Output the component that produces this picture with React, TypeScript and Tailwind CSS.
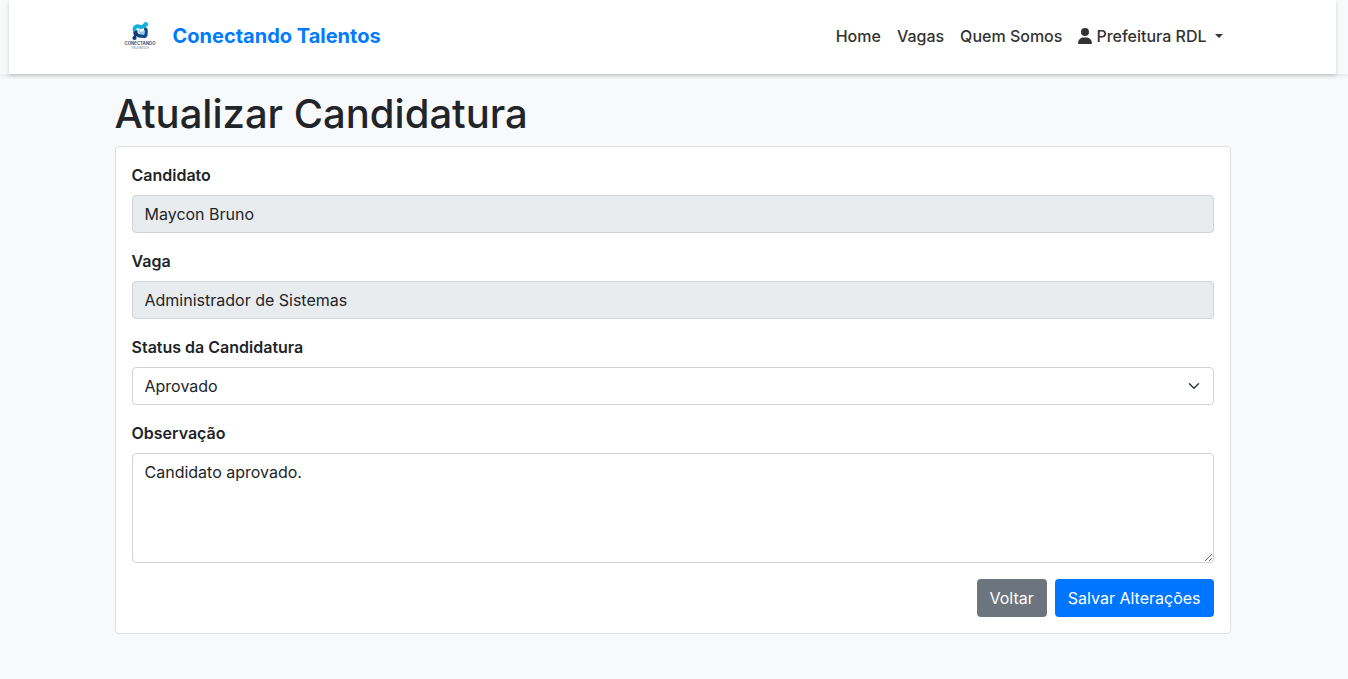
import { useState } from "react";
import type { ReactNode } from "react";
import { FaUser } from "react-icons/fa6";

function Logo() {
  return (
    <svg viewBox="0 0 50 50" className="size-[50px] shrink-0" role="img" aria-label="Conectando Talentos">
      <path
        d="M20 19.800c-1-1.900-.4-3.700 1.200-4.400 2.200-.9 3.400.8 5.200.7 1.600-.1 2.200-1.400 4.300-2.300"
        fill="none"
        stroke="#12b0da"
        strokeWidth="3.800"
        strokeLinecap="round"
      />
      <path
        d="M30.500 18c1.300 1.600.4 2.600.5 4.200.1 1.400.2 2.300-.9 3-1.600.8-2.800-.5-4.600-.2-2.300.4-3.400-1.300-4.900-2.300"
        fill="none"
        stroke="#124a8c"
        strokeWidth="3.400"
        strokeLinecap="round"
      />
      <path d="M18.200 21l4.400-2c-.6 2 .2 3.700 1.600 4.900l-5 2z" fill="#123a78" />
      <path d="M23.500 18.500c-.4 3 1.500 5.200 4.200 4.700 1.800-.3 2.700-1.900 2.300-3.700-1.500 1.300-2.300.6-3-.6z" fill="#8fc9e6" />
      <circle cx="26.300" cy="19.200" r="1.500" fill="#ffffff" />
      <circle cx="19.500" cy="26.900" r="2.100" fill="#123a78" />
      <circle cx="30.800" cy="13.300" r="2.300" fill="#12b5dc" />
      <text x="25" y="34" textAnchor="middle" fontSize="4.300" fontWeight="700" fill="#4c566b" fontFamily="Inter, sans-serif">
        CONECTANDO
      </text>
      <text x="25" y="38" textAnchor="middle" fontSize="3.400" fontWeight="500" fill="#7d8593" fontFamily="Inter, sans-serif">
        TALENTOS
      </text>
    </svg>
  );
}

function Field({ id, label, children }: { id: string; label: string; children: ReactNode }) {
  return (
    <div className="mb-4">
      <label htmlFor={id} className="mb-2 block w-fit font-semibold">
        {label}
      </label>
      {children}
    </div>
  );
}

const control = "block w-full rounded border border-[#ced4da] px-3 text-[#212529]";

export default function App() {
  const [status, setStatus] = useState("Aprovado");

  return (
    <div className="min-h-screen bg-[#f8f9fb] font-['Inter',sans-serif] text-base text-[#212529]">
      <header className="pl-[9px] pr-3 shadow-[0_2px_4px_rgba(0,0,0,0.075)]">
        <nav className="bg-white pt-[11px] pb-[13px] shadow-[0_2px_4px_rgba(0,0,0,0.16)]">
          <div className="mx-auto flex max-w-[1140px] items-center justify-between px-3">
            <a href="#home" className="flex items-center gap-2 text-xl font-bold text-[#007bff]">
              <Logo />
              Conectando Talentos
            </a>
            <div className="flex items-center gap-4 px-2 font-medium text-[#333333]">
              <a href="#home">Home</a>
              <a href="#vagas">Vagas</a>
              <a href="#quem-somos">Quem Somos</a>
              <button type="button" aria-haspopup="menu" className="flex items-center gap-1">
                <FaUser className="h-4 w-[14px]" aria-hidden="true" />
                Prefeitura RDL
                <svg viewBox="0 0 8 4" className="ml-1 h-1 w-2" aria-hidden="true">
                  <path d="M0 0h8L4 4z" fill="currentColor" />
                </svg>
              </button>
            </div>
          </div>
        </nav>
      </header>

      <main className="pr-[3px]">
        <div className="mx-auto max-w-[1140px] px-3 pt-4 pb-8">
          <h1 className="mb-2 text-[40px] leading-[48px] font-medium">Atualizar Candidatura</h1>
          <form
            className="rounded border border-[#dfdfdf] bg-white p-4"
            onSubmit={(event) => event.preventDefault()}
          >
            <Field id="candidato" label="Candidato">
              <input id="candidato" readOnly value="Maycon Bruno" className={`${control} h-[38px] bg-[#e9ecef]`} />
            </Field>
            <Field id="vaga" label="Vaga">
              <input id="vaga" readOnly value="Administrador de Sistemas" className={`${control} h-[38px] bg-[#e9ecef]`} />
            </Field>
            <Field id="status" label="Status da Candidatura">
              <div className="grid items-center">
                <select
                  id="status"
                  value={status}
                  onChange={(event) => setStatus(event.target.value)}
                  className={`${control} col-start-1 row-start-1 h-[38px] appearance-none bg-white`}
                >
                  <option>Aprovado</option>
                  <option>Em análise</option>
                  <option>Reprovado</option>
                </select>
                <svg
                  viewBox="0 0 16 16"
                  className="pointer-events-none col-start-1 row-start-1 mr-[14px] h-3 w-3 justify-self-end"
                  aria-hidden="true"
                >
                  <path d="m2 5 6 6 6-6" fill="none" stroke="#343a40" strokeWidth="2" strokeLinecap="round" strokeLinejoin="round" />
                </svg>
              </div>
            </Field>
            <Field id="observacao" label="Observação">
              <textarea
                id="observacao"
                defaultValue="Candidato aprovado."
                className={`${control} h-[110px] resize-y bg-white py-[6px]`}
              />
            </Field>
            <div className="flex justify-end gap-2">
              <button type="button" className="h-[38px] rounded bg-[#6c757d] px-[13px] text-white">
                Voltar
              </button>
              <button type="submit" className="h-[38px] rounded bg-[#0075ff] px-[13px] text-white">
                Salvar Alterações
              </button>
            </div>
          </form>
        </div>
      </main>
    </div>
  );
}
